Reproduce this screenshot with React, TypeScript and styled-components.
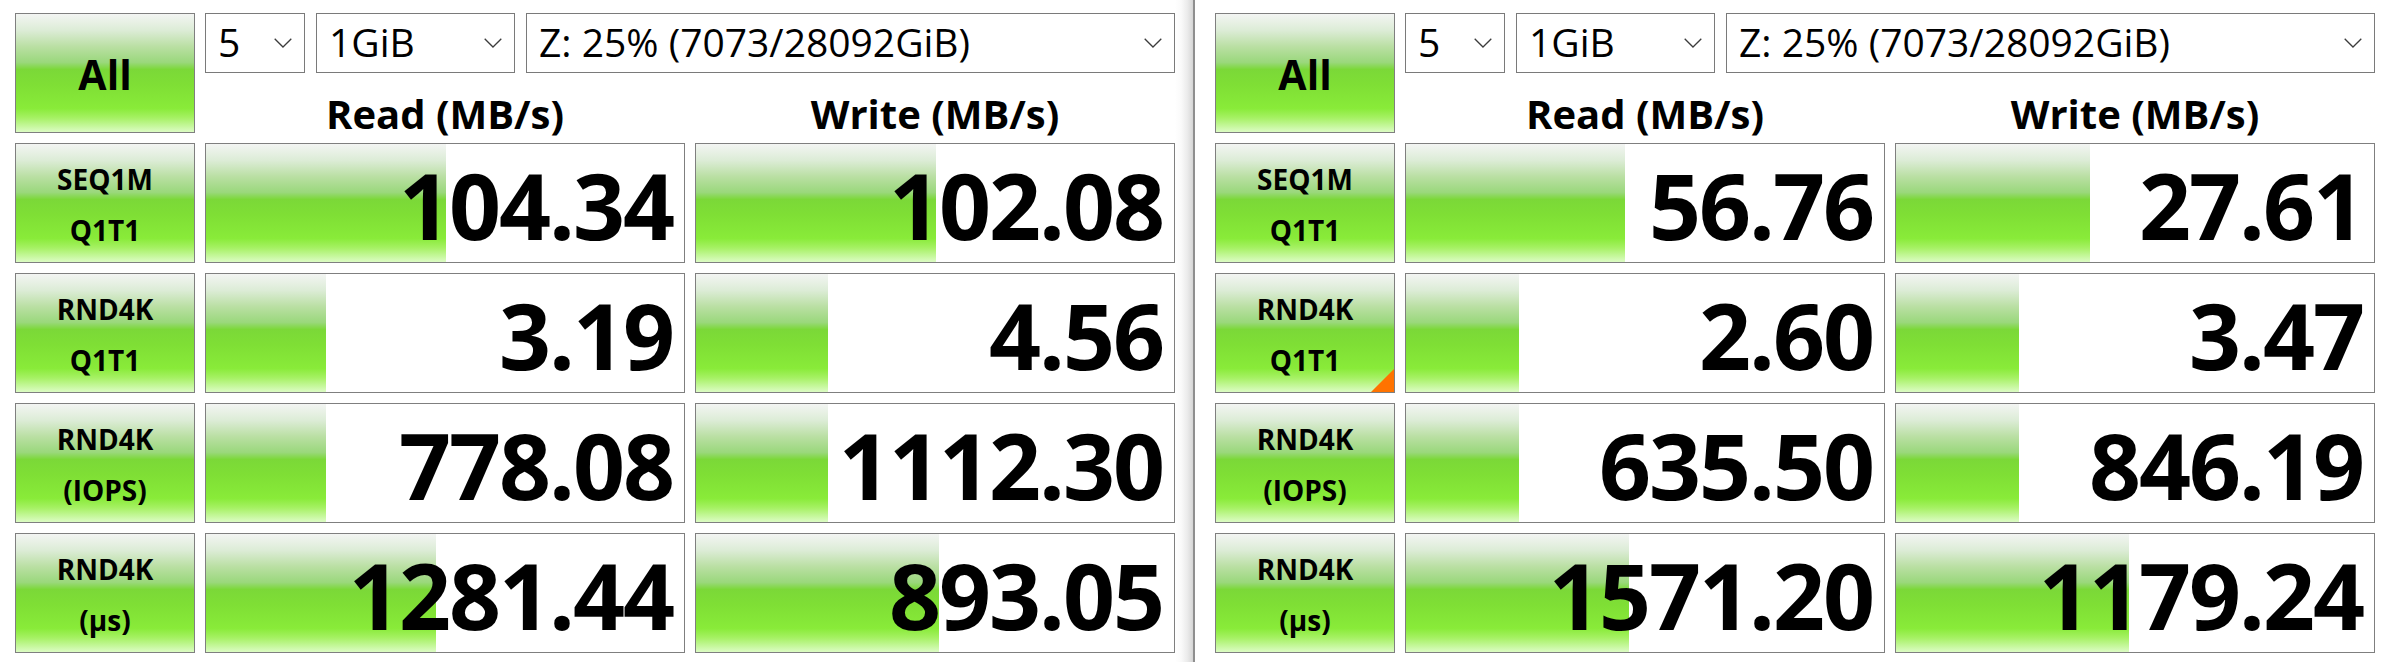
import React from "react";
import styled, { createGlobalStyle, css } from "styled-components";

const GlobalStyle = createGlobalStyle`
  html, body { margin: 0; padding: 0; background: #ffffff; }
  body { font-family: "Open Sans", "Noto Sans", sans-serif; color: #000000; }
  * { box-sizing: border-box; }
`;

const green = css`
  background: linear-gradient(
    to bottom,
    #f3f5f3 0%,
    #dcecd6 14%,
    #b9dfa2 28%,
    #9ad87c 41%,
    #7bd838 47%,
    #7fdf35 60%,
    #89eb39 80%,
    #a6f164 88%,
    #dcfcc4 100%
  );
`;

const Page = styled.div`
  display: flex;
  width: 2391px;
  height: 662px;
  overflow: hidden;
  background: #ffffff;
`;

const Window = styled.div`
  flex: none;
  padding: 13px 0 0 15px;
  display: grid;
  grid-template-columns: 180px 480px 480px;
  grid-template-rows: 60px 50px repeat(4, 120px);
  column-gap: 10px;
  row-gap: 10px;
  align-content: start;
`;

const Edge = styled.div`
  flex: none;
  width: 25px;
  align-self: stretch;
  background: linear-gradient(
    to right,
    #ffffff 0px,
    #fafafa 6px,
    #ececec 12px,
    #dadada 17px,
    #d2d2d2 18px,
    #8f8f8f 18px,
    #8f8f8f 20px,
    #ffffff 20px
  );
`;

const AllButton = styled.div`
  grid-row: 1 / span 2;
  grid-column: 1;
  border: 1px solid #7f7f7f;
  ${green};
  display: flex;
  align-items: center;
  justify-content: center;
  padding-top: 3px;
  font-weight: 700;
  font-size: 41px;
  line-height: 1.4;
`;

const ComboRow = styled.div`
  grid-row: 1;
  grid-column: 2 / span 2;
  display: flex;
  gap: 11px;
`;

const Combo = styled.div<{ $w?: number }>`
  ${(p) => (p.$w ? `width: ${p.$w}px; flex: none;` : `flex: 1;`)}
  height: 60px;
  border: 1px solid #7a7a7a;
  background: #ffffff;
  display: flex;
  align-items: center;
  justify-content: space-between;
  padding: 0 12px 0 12px;
  font-size: 39px;
  font-weight: 400;
  line-height: 54px;
  white-space: nowrap;
`;

const ComboText = styled.span`
  padding-bottom: 2px;
`;

const Header = styled.div<{ $col: number }>`
  grid-row: 2;
  grid-column: ${(p) => p.$col};
  margin: -10px 0 -10px 0;
  padding-bottom: 2px;
  display: flex;
  align-items: flex-end;
  justify-content: center;
  font-weight: 700;
  font-size: 40px;
  line-height: normal;
`;

const Label = styled.div<{ $row: number; $flag?: boolean }>`
  grid-row: ${(p) => p.$row};
  grid-column: 1;
  position: relative;
  border: 1px solid #7f7f7f;
  ${green};
  display: flex;
  flex-direction: column;
  align-items: center;
  justify-content: center;
  padding-top: 3px;
  font-weight: 700;
  font-size: 28px;
  line-height: 51px;
  text-align: center;
  ${(p) =>
    p.$flag &&
    css`
      &::after {
        content: "";
        position: absolute;
        right: 0;
        bottom: 0;
        width: 23px;
        height: 23px;
        background: #ff7300;
        clip-path: polygon(100% 0, 100% 100%, 0 100%);
      }
    `}
`;

const Cell = styled.div<{ $row: number; $col: number }>`
  grid-row: ${(p) => p.$row};
  grid-column: ${(p) => p.$col};
  border: 1px solid #7f7f7f;
  background: #ffffff;
  display: grid;
  grid-template: 1fr / 1fr;
`;

const Bar = styled.div`
  grid-area: 1 / 1;
  justify-self: start;
  align-self: stretch;
  ${green};
`;

const Value = styled.div`
  grid-area: 1 / 1;
  justify-self: end;
  align-self: start;
  padding: 5px 11px 0 0;
  font-weight: 700;
  font-size: 91px;
  line-height: 113px;
  letter-spacing: -2px;
  white-space: nowrap;
`;

const Chevron = () => (
  <svg width="18" height="10" viewBox="0 0 18 10" fill="none">
    <polyline points="0.7,0.7 9,9 17.3,0.7" stroke="#3c3c3c" strokeWidth="1.3" />
  </svg>
);

type Metric = { text: string; bar: number; latency?: boolean };
type Row = { l1: string; l2: string; flag?: boolean; read: Metric; write: Metric };
type PanelData = { rows: Row[] };

const barRatio = (m: Metric) => {
  const r = m.latency ? 1 - Math.log10(m.bar) / 6 : Math.log10(m.bar * 10) / 6;
  return Math.max(0, Math.min(1, r));
};

const panels: PanelData[] = [
  {
    rows: [
      { l1: "SEQ1M", l2: "Q1T1", read: { text: "104.34", bar: 104.34 }, write: { text: "102.08", bar: 102.08 } },
      { l1: "RND4K", l2: "Q1T1", read: { text: "3.19", bar: 3.19 }, write: { text: "4.56", bar: 4.56 } },
      { l1: "RND4K", l2: "(IOPS)", read: { text: "778.08", bar: 3.19 }, write: { text: "1112.30", bar: 4.56 } },
      {
        l1: "RND4K",
        l2: "(µs)",
        read: { text: "1281.44", bar: 1281.44, latency: true },
        write: { text: "893.05", bar: 893.05, latency: true },
      },
    ],
  },
  {
    rows: [
      { l1: "SEQ1M", l2: "Q1T1", read: { text: "56.76", bar: 56.76 }, write: { text: "27.61", bar: 27.61 } },
      { l1: "RND4K", l2: "Q1T1", flag: true, read: { text: "2.60", bar: 2.6 }, write: { text: "3.47", bar: 3.47 } },
      { l1: "RND4K", l2: "(IOPS)", read: { text: "635.50", bar: 2.6 }, write: { text: "846.19", bar: 3.47 } },
      {
        l1: "RND4K",
        l2: "(µs)",
        read: { text: "1571.20", bar: 1571.2, latency: true },
        write: { text: "1179.24", bar: 1179.24, latency: true },
      },
    ],
  },
];

const Panel = ({ data }: { data: PanelData }) => (
  <Window>
    <AllButton>All</AllButton>
    <ComboRow>
      <Combo $w={100}>
        <ComboText>5</ComboText>
        <Chevron />
      </Combo>
      <Combo $w={199}>
        <ComboText>1GiB</ComboText>
        <Chevron />
      </Combo>
      <Combo>
        <ComboText>Z: 25% (7073/28092GiB)</ComboText>
        <Chevron />
      </Combo>
    </ComboRow>
    <Header $col={2}>Read (MB/s)</Header>
    <Header $col={3}>Write (MB/s)</Header>
    {data.rows.map((r, i) => (
      <React.Fragment key={i}>
        <Label $row={i + 3} $flag={r.flag}>
          <span>{r.l1}</span>
          <span>{r.l2}</span>
        </Label>
        <Cell $row={i + 3} $col={2}>
          <Bar style={{ width: `${barRatio(r.read) * 100}%` }} />
          <Value>{r.read.text}</Value>
        </Cell>
        <Cell $row={i + 3} $col={3}>
          <Bar style={{ width: `${barRatio(r.write) * 100}%` }} />
          <Value>{r.write.text}</Value>
        </Cell>
      </React.Fragment>
    ))}
  </Window>
);

export default function App() {
  return (
    <>
      <GlobalStyle />
      <Page>
        <Panel data={panels[0]} />
        <Edge />
        <Panel data={panels[1]} />
      </Page>
    </>
  );
}
